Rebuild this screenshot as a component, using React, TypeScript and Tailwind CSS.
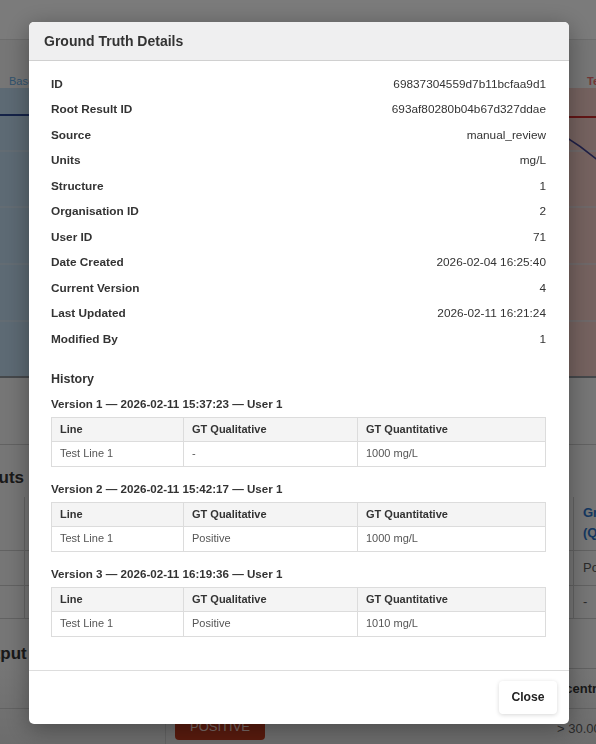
import React from "react";

const details: [string, string][] = [
  ["ID", "69837304559d7b11bcfaa9d1"],
  ["Root Result ID", "693af80280b04b67d327ddae"],
  ["Source", "manual_review"],
  ["Units", "mg/L"],
  ["Structure", "1"],
  ["Organisation ID", "2"],
  ["User ID", "71"],
  ["Date Created", "2026-02-04 16:25:40"],
  ["Current Version", "4"],
  ["Last Updated", "2026-02-11 16:21:24"],
  ["Modified By", "1"],
];

const history = [
  { version: 1, date: "2026-02-11 15:37:23", user: 1, line: "Test Line 1", qual: "-", quant: "1000 mg/L" },
  { version: 2, date: "2026-02-11 15:42:17", user: 1, line: "Test Line 1", qual: "Positive", quant: "1000 mg/L" },
  { version: 3, date: "2026-02-11 16:19:36", user: 1, line: "Test Line 1", qual: "Positive", quant: "1010 mg/L" },
];

function BackgroundPage() {
  return (
    <div className="h-[744px] overflow-hidden bg-[#ececec]">
      {/* top bar */}
      <div className="h-[40px] bg-[#f7f7f7] border-b border-[#dadada]" />

      {/* chart legend */}
      <div className="h-[48px] flex items-end justify-between text-[11px] leading-[14px]">
        <span className="pl-[9px] text-[#62a6dc]">Baseline</span>
        <span className="w-[9px] shrink-0 whitespace-nowrap font-bold text-[#e46a6a]">Test Line 1</span>
      </div>

      {/* chart */}
      <div className="relative h-[290px] flex">
        <div className="flex-1 bg-[#bad4e8]" />
        <div className="flex-1 bg-[#ebc5bf]" />
        <svg className="absolute inset-0" width="596" height="290" viewBox="0 0 596 290">
          {[63, 119, 176, 233].map((y) => (
            <line key={y} x1="0" x2="596" y1={y} y2={y} stroke="#d3dde6" strokeWidth="1" />
          ))}
          <line x1="0" x2="298" y1="27" y2="27" stroke="#2a4690" strokeWidth="2" />
          <line x1="298" x2="596" y1="29" y2="29" stroke="#c42a2a" strokeWidth="2" />
          <path d="M 430 8 C 510 14, 560 40, 600 74" fill="none" stroke="#3e3f8c" strokeWidth="1.5" />
          <line x1="0" x2="596" y1="289" y2="289" stroke="#8b9096" strokeWidth="2" />
        </svg>
      </div>

      <div className="h-[67px] border-b border-[#c4c4c4]" />

      {/* inputs */}
      <div className="h-[52px] flex items-end pb-[9px]">
        <h3 className="-ml-[27px] text-[17px] leading-[20px] font-bold text-[#333]">Inputs</h3>
      </div>
      <div className="grid grid-cols-[25px_1fr_22px] text-[13px] text-[#555]">
        <div className="h-[54px] border-r border-b border-[#c4c4c4]" />
        <div className="border-r border-b border-[#c4c4c4]" />
        <div className="border-b border-[#c4c4c4] pl-[9px] pt-[6px] whitespace-nowrap font-bold leading-[20px] text-[#2a6fc0]">
          Ground Truth
          <br />
          (Qualitative)
        </div>
        <div className="h-[35px] border-r border-b border-[#c4c4c4]" />
        <div className="border-r border-b border-[#c4c4c4]" />
        <div className="border-b border-[#c4c4c4] pl-[9px] flex items-center whitespace-nowrap">Positive</div>
        <div className="h-[33px] border-r border-b border-[#c4c4c4]" />
        <div className="border-r border-b border-[#c4c4c4]" />
        <div className="border-b border-[#c4c4c4] pl-[9px] flex items-center">-</div>
      </div>

      {/* output */}
      <div className="h-[49px] flex items-end pb-[4px]">
        <h3 className="-ml-[29px] text-[17px] leading-[20px] font-bold text-[#333]">Output</h3>
      </div>
      <div className="grid grid-cols-[166px_374px_1fr] text-[13px] text-[#555] bg-gradient-to-b from-transparent to-[#d8d8d8]">
        <div className="h-[41px] border-b border-[#c4c4c4]" />
        <div className="border-b border-[#c4c4c4]" />
        <div className="border-t border-b border-[#c4c4c4] flex items-center whitespace-nowrap font-bold text-[#333]">
          Concentration
        </div>
        <div className="h-[40px] border-r border-[#c4c4c4]" />
        <div className="pl-[9px] pt-[4px]">
          <span className="inline-flex h-[27px] w-[90px] items-center justify-center rounded-[4px] bg-[#b2361c] text-[13px] text-[#f3d3cc]">
            POSITIVE
          </span>
        </div>
        <div className="pl-[17px] pt-[10px] whitespace-nowrap">&gt; 30.00 mg/L</div>
      </div>
    </div>
  );
}

function HistoryTable({ line, qual, quant }: { line: string; qual: string; quant: string }) {
  return (
    <table className="w-full border-collapse text-[11px]">
      <thead>
        <tr className="bg-[#f4f4f4]">
          <th className="w-[132px] h-[24px] border border-[#dcdcdc] pl-[8px] text-left font-bold text-[#333]">Line</th>
          <th className="w-[174px] border border-[#dcdcdc] pl-[8px] text-left font-bold text-[#333]">GT Qualitative</th>
          <th className="border border-[#dcdcdc] pl-[8px] text-left font-bold text-[#333]">GT Quantitative</th>
        </tr>
      </thead>
      <tbody>
        <tr>
          <td className="h-[25px] border border-[#dcdcdc] pl-[8px] text-[#555]">{line}</td>
          <td className="border border-[#dcdcdc] pl-[8px] text-[#555]">{qual}</td>
          <td className="border border-[#dcdcdc] pl-[8px] text-[#555]">{quant}</td>
        </tr>
      </tbody>
    </table>
  );
}

export default function App() {
  return (
    <div className="relative h-[744px] overflow-hidden font-['Liberation_Sans',Arial,sans-serif]">
      <BackgroundPage />

      {/* modal */}
      <div className="fixed inset-0 flex items-center justify-center pl-[2px] pt-[2px] bg-black/50">
        <div className="w-[540px] h-[702px] flex flex-col overflow-hidden rounded-[5px] bg-white shadow-[0_5px_24px_rgba(0,0,0,0.35)]">
          <div className="h-[39px] shrink-0 flex items-center px-[15px] bg-[#efeff0] border-b border-[#d0d0d0]">
            <h2 className="text-[14px] font-bold text-[#333]">Ground Truth Details</h2>
          </div>

          <div className="flex-1 pl-[22px] pr-[23px] pt-[11px]">
            {details.map(([label, value]) => (
              <div key={label} className="h-[25.5px] flex items-center justify-between">
                <span className="text-[11.8px] font-bold text-[#333]">{label}</span>
                <span className="text-[11.8px] text-[#333]">{value}</span>
              </div>
            ))}

            <h3 className="mt-[17px] h-[18px] text-[12.5px] leading-[18px] font-bold text-[#333]">History</h3>

            <div className="mt-[8px] flex flex-col gap-[14px]">
              {history.map((h) => (
                <div key={h.version}>
                  <h4 className="h-[16px] mb-[5px] text-[11.6px] leading-[16px] font-bold text-[#333]">
                    Version {h.version} — {h.date} — User {h.user}
                  </h4>
                  <HistoryTable line={h.line} qual={h.qual} quant={h.quant} />
                </div>
              ))}
            </div>
          </div>

          <div className="h-[54px] shrink-0 flex items-center justify-end pr-[12px] border-t border-[#dddddd]">
            <button className="h-[33px] w-[58px] rounded-[4px] bg-white text-[12.2px] font-bold text-[#222] shadow-[0_1px_4px_rgba(0,0,0,0.16)]">
              Close
            </button>
          </div>
        </div>
      </div>
    </div>
  );
}
